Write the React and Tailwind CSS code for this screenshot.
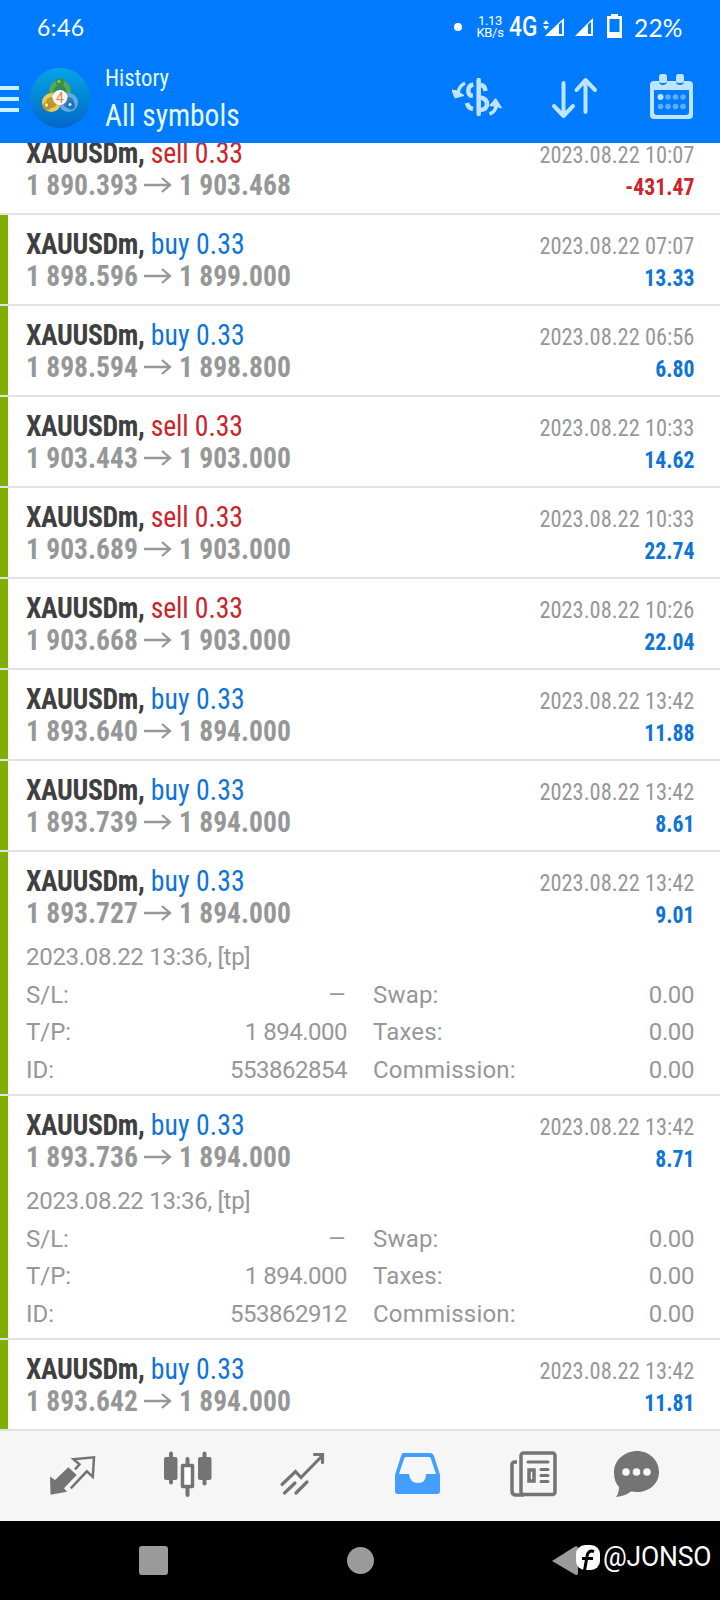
const deals = [
  { side: "sell", open: "1 890.393", close: "1 903.468", time: "2023.08.22 10:07", profit: "-431.47" },
  { side: "buy", open: "1 898.596", close: "1 899.000", time: "2023.08.22 07:07", profit: "13.33", tp: true },
  { side: "buy", open: "1 898.594", close: "1 898.800", time: "2023.08.22 06:56", profit: "6.80", tp: true },
  { side: "sell", open: "1 903.443", close: "1 903.000", time: "2023.08.22 10:33", profit: "14.62", tp: true },
  { side: "sell", open: "1 903.689", close: "1 903.000", time: "2023.08.22 10:33", profit: "22.74", tp: true },
  { side: "sell", open: "1 903.668", close: "1 903.000", time: "2023.08.22 10:26", profit: "22.04", tp: true },
  { side: "buy", open: "1 893.640", close: "1 894.000", time: "2023.08.22 13:42", profit: "11.88", tp: true },
  { side: "buy", open: "1 893.739", close: "1 894.000", time: "2023.08.22 13:42", profit: "8.61", tp: true },
  { side: "buy", open: "1 893.727", close: "1 894.000", time: "2023.08.22 13:42", profit: "9.01", tp: true, id: "553862854" },
  { side: "buy", open: "1 893.736", close: "1 894.000", time: "2023.08.22 13:42", profit: "8.71", tp: true, id: "553862912" },
  { side: "buy", open: "1 893.642", close: "1 894.000", time: "2023.08.22 13:42", profit: "11.81", tp: true },
];

const StatusBar = () => (
  <div className="flex h-[54px] items-center pl-[37px] text-white">
    <span className="w-[417px] font-[Lato] text-[23px] leading-none tracking-[0.4px]">6:46</span>
    <span className="h-2 w-2 rounded-full bg-white" />
    <span className="ml-[14px] w-[28px] text-center text-[13px] leading-[12px] tracking-[-0.3px]">
      1.13
      <br />
      KB/s
    </span>
    <span className="mt-px ml-[5px] w-[27px] origin-left scale-x-[0.84] text-[27px] leading-none font-medium">4G</span>
    <svg className="ml-[7px]" width="82" height="30" viewBox="0 0 82 30" fill="#fff">
      <path d="M0 12l3-4 3 4zM0 14h6l-3 4z" />
      <path d="M2 24L21 6v18z" />
      <path d="M16 12.500l3-2.800V22h-3z" fill="#007aff" />
      <path d="M32 24L50 6v18z" />
      <path d="M45 12.500l3-2.800V22h-3z" fill="#007aff" />
      <path d="M64 4h4V2h7v2h4v22H64zM66.500 7v13h10V7z" fillRule="evenodd" />
    </svg>
    <span className="mt-[2px] ml-[9px] font-[Lato] text-[24.5px] leading-none tracking-[0.2px]">22%</span>
  </div>
);

const Logo = () => (
  <svg width="60" height="60" viewBox="0 0 60 60">
    <defs>
      <linearGradient id="disc" x1="0" y1="0" x2="0" y2="1">
        <stop offset="0" stopColor="#05a4e8" />
        <stop offset="0.5" stopColor="#0287d2" />
        <stop offset="1" stopColor="#0566ca" />
      </linearGradient>
    </defs>
    <circle cx="30" cy="30" r="30" fill="url(#disc)" />
    <circle cx="30" cy="23" r="8.500" fill="#2c8b6a" stroke="#5da851" strokeWidth="4.500" />
    <circle cx="21.500" cy="34.500" r="7.500" fill="#b89a3a" stroke="#e6cb58" strokeWidth="4" />
    <circle cx="38.500" cy="34.500" r="7.500" fill="#2d7cbd" stroke="#62aee4" strokeWidth="4" />
    <circle cx="30" cy="14.500" r="4" fill="#3f8f35" />
    <circle cx="29" cy="13.500" r="1.500" fill="#8ecb69" />
    <circle cx="17" cy="38" r="4" fill="#c08f1d" />
    <circle cx="16.500" cy="37" r="1.700" fill="#fff09a" />
    <circle cx="41" cy="37.500" r="4" fill="#2573b8" />
    <circle cx="40" cy="36.500" r="1.500" fill="#d0efff" />
    <circle cx="30" cy="29.500" r="7.500" fill="#fff6ee" />
    <text x="30" y="34.500" textAnchor="middle" fontFamily="Roboto" fontSize="14" fill="#e8835f">4</text>
  </svg>
);

const Header = () => (
  <div className="flex h-[89px] items-start text-[#e4fbff]">
    <div className="mt-[32px] w-[19px] space-y-[7px]">
      <div className="h-1 bg-[#c9f3ff]" />
      <div className="h-1 bg-[#c9f3ff]" />
      <div className="h-1 bg-[#c9f3ff]" />
    </div>
    <div className="mt-[14px] ml-[11px]">
      <Logo />
    </div>
    <div className="mt-[8px] ml-[15px] w-[341px] font-['Roboto_Condensed',Roboto,sans-serif] [font-stretch:75%]">
      <div className="origin-left scale-x-[0.945] text-[24px] leading-[32px]">History</div>
      <div className="origin-left scale-x-[0.92] text-[32px] leading-[43px]">All symbols</div>
    </div>
    <svg className="mt-[22px] ml-[6px]" width="50" height="44" viewBox="0 0 50 44" fill="none" stroke="#bfe4ff" strokeWidth="4">
      <path d="M26.700 4V38" strokeWidth="4.500" strokeLinecap="round" />
      <path d="M21.300 8.500q-5 1-5 6t4.500 5.500M15 27q1 5 6 6M28 9q5 0 5.500 6M28 21.500q7 1 7 6.500t-7 6" strokeWidth="4.500" />
      <path d="M13 7q-6 3-7 10M37.500 38q6-2 7-9" strokeWidth="3.500" />
      <path d="M0 14l5 1 7 4.500-9 2.500zM43.700 22.500l6 9.500-5-1.500-7-1z" fill="#bfe4ff" strokeWidth="1" strokeLinejoin="round" />
    </svg>
    <svg className="mt-[22px] ml-[49px]" width="48" height="44" viewBox="0 0 48 44" fill="none" stroke="#bfe4ff" strokeWidth="4" strokeLinecap="round" strokeLinejoin="round">
      <path d="M12.500 7v33M3 30l9.500 10L22 30M34.500 36V4M25.500 14l9-10 9.500 10" />
    </svg>
    <svg className="mt-[20px] ml-[50px]" width="46" height="46" viewBox="0 0 46 46" fill="#bfe4ff">
      <path d="M5 7h5q0 4 4 4t4-4h9q0 4 4 4t4-4h5q4 0 4 4v30q0 4-4 4H5q-4 0-4-4V11q0-4 4-4zM5 16v22q0 3 3 3h29q3 0 3-3V16z" fillRule="evenodd" />
      <rect x="10" y="0" width="8" height="9" rx="2.500" />
      <rect x="27" y="0" width="8" height="9" rx="2.500" />
      <circle cx="11.500" cy="23" r="3" />
      <g opacity="0.5">
        <circle cx="19" cy="23" r="2.800" />
        <circle cx="26.500" cy="23" r="2.800" />
        <circle cx="34" cy="23" r="2.800" />
        <circle cx="11.500" cy="32.500" r="2.800" />
        <circle cx="19" cy="32.500" r="2.800" />
        <circle cx="26.500" cy="32.500" r="2.800" />
        <circle cx="34" cy="32.500" r="2.800" />
      </g>
    </svg>
  </div>
);

const DetailRow = ({ left, leftValue, right, rightValue }) => (
  <div className="grid grid-cols-[321px_321px] gap-x-[26px]">
    <div className="flex justify-between">
      <span>{left}</span>
      {leftValue ? (
        <span className="tracking-[-0.5px]">{leftValue}</span>
      ) : (
        <span className="origin-right scale-x-[1.2]">–</span>
      )}
    </div>
    <div className="flex justify-between">
      <span className="tracking-[0.2px]">{right}</span>
      <span className="tracking-[-0.4px]">{rightValue}</span>
    </div>
  </div>
);

const Deal = ({ side, open, close, time, profit, tp, id }) => (
  <div className="flex border-b-2 border-[#e2e2e2]">
    <div className={`w-2 shrink-0 ${tp ? "bg-[#7fb000]" : "bg-white"}`} />
    <div className={`w-full pt-[13px] pr-[26px] pl-[18px] ${id ? "h-[242px]" : "h-[89px]"}`}>
      <div className="flex h-16 justify-between font-['Roboto_Condensed',Roboto,sans-serif] [font-stretch:75%] whitespace-nowrap">
        <div className="text-[29px] leading-8">
          <div className="origin-left scale-x-[0.955]">
            <span className="font-bold tracking-[-0.4px] text-[#3f3f3f]">XAUUSDm,</span>{" "}
            <span className={side === "buy" ? "tracking-[0.1px] text-[#0f74d8]" : "tracking-[-0.1px] text-[#c9252b]"}>{side} 0.33</span>
          </div>
          <div className="flex items-center font-bold text-[#969798]">
            <span className="w-[112px] origin-left scale-x-[0.95]">{open}</span>
            <svg className="mx-[6px]" width="28" height="18" viewBox="0 0 28 18" fill="none" stroke="#969798" strokeWidth="2.300">
              <path d="M0 9h26M18 2l8 7-8 7" />
            </svg>
            <span className="ml-px w-[112px] origin-left scale-x-[0.95]">{close}</span>
          </div>
        </div>
        <div className="pt-[2px] text-right text-[24.5px] leading-8">
          <div className="origin-right scale-x-[0.915] text-[#969798]">{time}</div>
          <div className={`origin-right scale-x-[0.905] text-[24px] font-bold ${profit.startsWith("-") ? "text-[#c9252b]" : "text-[#0f74d8]"}`}>{profit}</div>
        </div>
      </div>
      {id ? (
        <div className="mt-[10px] text-[24px] leading-[37.5px] text-[#969798]">
          <div className="tracking-[-0.3px]">2023.08.22 13:36, [tp]</div>
          <DetailRow left="S/L:" right="Swap:" rightValue="0.00" />
          <DetailRow left="T/P:" leftValue="1 894.000" right="Taxes:" rightValue="0.00" />
          <DetailRow left="ID:" leftValue={id} right="Commission:" rightValue="0.00" />
        </div>
      ) : null}
    </div>
  </div>
);

const TabBar = () => (
  <div className="flex h-[90px] items-start bg-[#f6f6f6] pt-[19px] pl-[48px]">
    <svg className="-mt-px" width="50" height="50" viewBox="0 0 50 50">
      <path d="M2 27.500l5 3.500L20.300 18.300 28.700 26 16 39.300l3 3.400-16.500 3z" fill="#747474" />
      <path d="M27 20.300l4.500-5-6-5 20.500-2-1.200 19.500-6-5.500-16 17" fill="none" stroke="#747474" strokeWidth="2.500" />
    </svg>
    <svg className="-mt-px ml-[64px]" width="52" height="50" viewBox="0 0 52 50" fill="#747474">
      <rect x="2" y="8" width="13.500" height="23" rx="2" />
      <rect x="7" y="2.500" width="4" height="33" rx="2" />
      <rect x="36" y="8" width="13.500" height="23" rx="2" />
      <rect x="40.500" y="2.500" width="4" height="34" rx="2" />
      <rect x="23.500" y="8" width="4" height="40" rx="2" />
      <rect x="20.500" y="16.500" width="10" height="21" fill="#fff" stroke="#747474" strokeWidth="3.500" strokeLinejoin="round" />
    </svg>
    <svg className="-mt-px ml-[64px]" width="50" height="50" viewBox="0 0 50 50" fill="none" stroke="#747474" strokeWidth="3.200" strokeLinecap="round">
      <path d="M4 35.500l13.500-13 5.500 6L44 7M36.500 5.500h8v8M6.500 44l10.500-10M18 44l11-11" />
    </svg>
    <svg className="ml-[65px]" width="50" height="50" viewBox="0 0 50 50">
      <path d="M10 3h27q3 0 4 3l6 19v16q0 3-3 3H5q-3 0-3-3V25L8 6q1-3 2-3zM13 7q-2 0-2 2L6 24h10q1 9 9 9t8-9h10L38 9q0-2-2-2z" fill="#429eff" fillRule="evenodd" />
    </svg>
    <svg className="ml-[65px]" width="50" height="50" viewBox="0 0 50 50" fill="none" stroke="#747474" strokeWidth="3.500">
      <rect x="13" y="3" width="34" height="41.500" rx="2.500" />
      <path d="M9 12H7q-3 0-3 3v26q0 4 4 4h8" />
      <path d="M20 12h20M33 19.500h7M33 25.500h7M33 31.500h7" strokeLinecap="round" strokeWidth="3" />
      <rect x="21" y="20" width="5" height="11" />
    </svg>
    <svg className="ml-[55px]" width="50" height="50" viewBox="0 0 50 50">
      <path d="M24 1c12 0 22 9 22 21s-10 20-22 20l-6-.5Q12 46 3 47q3-4 3-10-5-5-5-15C1 10 12 1 24 1z" fill="#747474" />
      <circle cx="13" cy="22" r="3.800" fill="#f6f6f6" />
      <circle cx="23.500" cy="22" r="3.800" fill="#f6f6f6" />
      <circle cx="34" cy="22" r="3.800" fill="#f6f6f6" />
    </svg>
  </div>
);

const SystemNav = () => (
  <div className="flex h-[79px] items-start bg-black pt-[25px] pl-[139px]">
    <span className="h-[29px] w-[29px] rounded-[3px] bg-[#9b9b9b]" />
    <span className="mt-px ml-[179px] h-[27px] w-[27px] rounded-full bg-[#9b9b9b]" />
    <svg className="-mt-[3px] ml-[177px] shrink-0" width="50" height="36" viewBox="0 0 50 36">
      <path d="M1 18L24 3.500q3-1 3 2V30q0 3-3 1.500z" fill="#9b9b9b" />
      <rect x="25" y="2" width="24" height="25" rx="9" fill="#fff" />
      <path d="M43 8.500q-6-2-7 5l-3 17M31 15.500h11" fill="none" stroke="#000" strokeWidth="3" />
    </svg>
    <span className="ml-[2px] origin-left scale-x-[0.98] text-[27px] leading-[23px] tracking-[-0.2px] text-white">@JONSO</span>
  </div>
);

const App = () => (
  <div className="h-[1600px] w-[720px] overflow-hidden bg-white font-[Roboto,sans-serif]">
    <header className="h-[143px] bg-[#007aff]">
      <StatusBar />
      <Header />
    </header>
    <main className="flex h-[1288px] flex-col justify-end overflow-hidden">
      {deals.map((deal) => (
        <Deal key={deal.open} {...deal} />
      ))}
    </main>
    <TabBar />
    <SystemNav />
  </div>
);

export default App;
